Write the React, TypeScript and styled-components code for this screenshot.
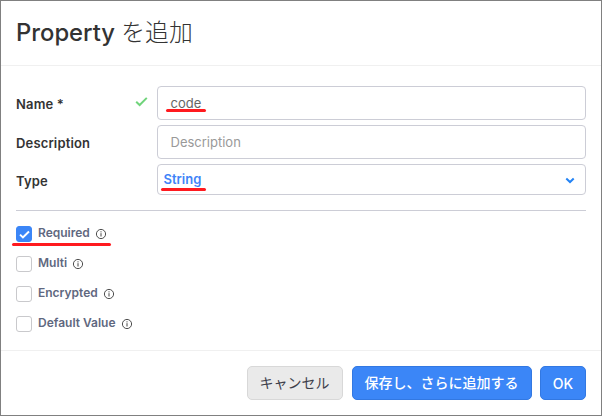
import React from 'react';
import styled, { createGlobalStyle } from 'styled-components';

const GlobalStyle = createGlobalStyle`
  * { box-sizing: border-box; }
  body { margin: 0; background: #fff; font-family: Inter, "Noto Sans CJK JP", sans-serif; }
`;

const Dialog = styled.div`
  width: 602px;
  height: 416px;
  display: flex;
  flex-direction: column;
  border: 1px solid #808080;
  background: #fff;
  color: #333;
  overflow: hidden;
`;

const Header = styled.header`
  height: 65px;
  flex: none;
  padding: 0 15px;
  border-bottom: 1px solid #f0f0f0;
`;

const Title = styled.h1`
  margin: 0;
  font-size: 23.8px;
  font-weight: 500;
  line-height: 60px;
  white-space: nowrap;
`;

const JapaneseTitle = styled.span`
  font-family: "Noto Sans CJK JP", sans-serif;
  font-weight: 300;
`;

const Body = styled.main`
  flex: 1;
  padding: 20px 15px 0;
`;

const Fields = styled.div`
  display: grid;
  grid-template-columns: 141px 1fr;
  grid-template-rows: 34px 34px 31px;
  row-gap: 5px;
  padding-bottom: 15px;
  border-bottom: 1px solid #cccdd6;
`;

const Label = styled.label`
  display: flex;
  align-items: center;
  justify-content: space-between;
  padding: 2px 9px 0 0;
  font-size: 13px;
  letter-spacing: 0.15px;
  font-weight: 600;

  svg { position: relative; top: -3px; }
`;

const Control = styled.div<{ $select?: boolean; $placeholder?: boolean }>`
  display: flex;
  align-items: center;
  justify-content: space-between;
  border: 1px solid #cccdd6;
  border-radius: 4px;
  padding: ${p => (p.$select ? '0 10px 0 6px' : '0 13px')};
  font-size: 13px;
  line-height: 18px;
  font-weight: ${p => (p.$select ? 600 : 400)};
  color: ${p => (p.$select ? '#3f83f8' : p.$placeholder ? '#999' : '#666')};
`;

const FieldValue = styled.span<{ $raised?: boolean }>`
  position: relative;
  margin-left: -0.5px;
  margin-top: ${p => (p.$raised ? -2 : 0)}px;
`;

const Underline = styled.i<{ $left: number; $top: number; $width: number }>`
  position: absolute;
  left: ${p => p.$left}px;
  top: ${p => p.$top}px;
  width: ${p => p.$width}px;
  height: 3px;
  border-radius: 2px;
  background: #ff1a1f;
`;

const Options = styled.div`
  display: grid;
  grid-auto-rows: 16px;
  row-gap: 14px;
  padding-top: 15px;
`;

const Option = styled.div`
  position: relative;
  display: flex;
  align-items: center;
  font-size: 12px;
  font-weight: 600;
  color: #5f6880;
`;

const Box = styled.span<{ $checked?: boolean }>`
  display: grid;
  place-items: center;
  width: 16px;
  height: 16px;
  margin-right: 6px;
  border: 1px solid ${p => (p.$checked ? '#3b86f7' : '#c9c9cc')};
  border-radius: 3px;
  background: ${p => (p.$checked ? '#3b86f7' : '#fff')};
`;

const OptionText = styled.span`
  line-height: 16px;
  margin: -3px 5px 0 0;
`;

const Footer = styled.footer`
  display: flex;
  justify-content: flex-end;
  align-items: flex-start;
  height: 65px;
  flex: none;
  border-top: 1px solid #f0f0f0;
  padding: 15px 15px 0;
`;

const Button = styled.button<{ $width: number; $primary?: boolean }>`
  width: ${p => p.$width}px;
  height: 34px;
  margin-left: 8px;
  padding: 0 1px 2px 0;
  border: 1px solid ${p => (p.$primary ? '#3278e2' : '#d8d8d8')};
  border-radius: 5px;
  background: ${p => (p.$primary ? '#3b86f7' : '#eaeaea')};
  color: ${p => (p.$primary ? '#fff' : '#3d404b')};
  font: ${p => (p.$primary ? 500 : 400)} 14px Inter, "Noto Sans CJK JP", sans-serif;
  white-space: nowrap;

  &:first-child { margin-right: 1px; }
  &:last-child { padding: 0; }
`;

const Tick = ({ size, color, width }: { size: number; color: string; width: number }) => (
  <svg width={size} height={size} viewBox="0 0 14 14" fill="none" stroke={color} strokeWidth={width}>
    <path d="M1.3 7.2 5 10.8 12.7 3.1" />
  </svg>
);

const Info = () => (
  <svg width="12" height="12" viewBox="0 0 12 12" fill="none" stroke="#444">
    <circle cx="6" cy="6" r="4.6" strokeWidth=".95" />
    <path d="M6 5.2v3.3M6 3.3v1.1" strokeWidth="1" />
  </svg>
);

const options = ['Required', 'Multi', 'Encrypted', 'Default Value'];

export default function App() {
  return (
    <>
      <GlobalStyle />
      <Dialog>
        <Header>
          <Title>Property <JapaneseTitle>を追加</JapaneseTitle></Title>
        </Header>
        <Body>
          <Fields>
            <Label>Name *<Tick size={13} color="#70d47b" width={2.1} /></Label>
            <Control>
              <FieldValue>code<Underline $left={-5} $top={15} $width={40} /></FieldValue>
            </Control>
            <Label>Description</Label>
            <Control $placeholder><FieldValue>Description</FieldValue></Control>
            <Label>Type</Label>
            <Control $select>
              <FieldValue $raised>String<Underline $left={-2.5} $top={18} $width={45} /></FieldValue>
              <svg width="10" height="8" viewBox="0 0 10 8" fill="none" stroke="#2383f5" strokeWidth="2">
                <path d="M1.3 2.5 5 6 8.7 2.5" />
              </svg>
            </Control>
          </Fields>
          <Options>
            {options.map((text, index) => (
              <Option key={text}>
                <Box $checked={index === 0}>
                  {index === 0 && <Tick size={11} color="#fff" width={2.5} />}
                </Box>
                <OptionText>{text}</OptionText>
                <Info />
                {index === 0 && <Underline $left={-4} $top={17} $width={99} />}
              </Option>
            ))}
          </Options>
        </Body>
        <Footer>
          <Button $width={96}>キャンセル</Button>
          <Button $width={180} $primary>保存し、さらに追加する</Button>
          <Button $width={46} $primary>OK</Button>
        </Footer>
      </Dialog>
    </>
  );
}
